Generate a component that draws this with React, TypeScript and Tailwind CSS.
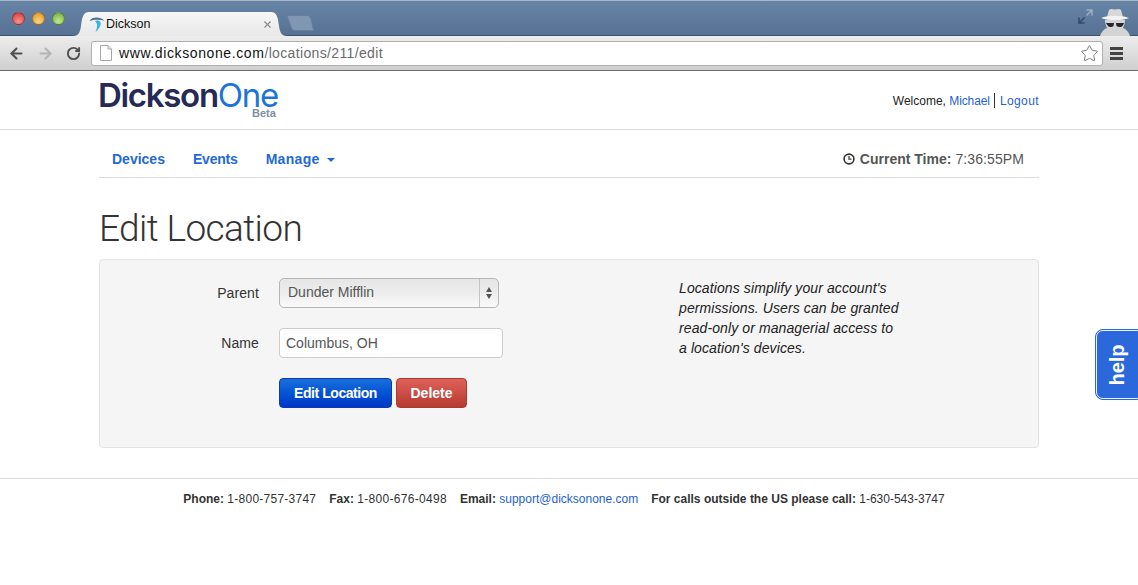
import React from "react";
import { ArrowLeft, ArrowRight, RotateCw, Star, X } from "lucide-react";

const sans = "font-['Liberation_Sans',Arial,sans-serif]";

const TrafficLight = ({ className }: { className: string }) => (
  <span className={`block w-[13px] h-[13px] rounded-full border border-black/30 ${className}`} />
);

const TabIcon = () => (
  <svg width="16" height="17" viewBox="0 0 16 17" className="shrink-0">
    <path d="M0.5 5 C3 0.5 11 0.5 15.5 4.5 C11 3.5 6 3 0.5 5 Z" fill="#4f6f96" />
    <path d="M8 4.5 C13 4 13.5 10 6.5 16 C8.5 11 9 8 6 5 Z" fill="#35b6e6" />
  </svg>
);

const PageIcon = () => (
  <svg width="12" height="16" viewBox="0 0 12 16" className="shrink-0">
    <path d="M0.5 0.5 H8 L11.5 4 V15.5 H0.5 Z" fill="#fff" stroke="#a8a8a8" />
    <path d="M8 0.5 V4 H11.5" fill="#e6e6e6" stroke="#a8a8a8" />
  </svg>
);

const Incognito = () => (
  <svg width="32" height="28" viewBox="0 0 32 28" className="block">
    <path d="M8 9 L10 2 C12 0 14 1.5 16 1.5 C18 1.5 20 0 22 2 L24 9 Z" fill="#d8d8d8" />
    <path d="M2 10 C9 7 23 7 30 10 C23 13 9 13 2 10 Z" fill="#f2f2f2" />
    <path d="M6 12 H26 C26 15 25 18 24 20 C27 21 30 24 31 28 H1 C2 24 5 21 8 20 C7 18 6 15 6 12 Z" fill="#d4d4d4" />
    <path d="M7 15 H15 L14.5 18 C12.5 20 9 19.5 7 15 Z M17 15 H25 C24 19.5 20 20 17.5 18 Z" fill="#262626" />
  </svg>
);

const ExpandIcon = () => (
  <svg width="15" height="15" viewBox="0 0 15 15" fill="none" strokeWidth="1.5">
    <path d="M8.5 1 H14 V6.5 M14 1 L8.5 6.5" stroke="#9db0c4" />
    <path d="M1 8.5 V14 H6.5 M1 14 L6.5 8.5" stroke="#2f4a68" />
  </svg>
);

const ClockIcon = () => (
  <svg width="12" height="12" viewBox="0 0 12 12" fill="none" stroke="#333" strokeWidth="1.6" className="shrink-0">
    <circle cx="6" cy="6" r="4.9" />
    <path d="M6 3 V6.2 H8.4" strokeWidth="1.2" />
  </svg>
);

const BrowserChrome = () => (
  <div className={`${sans} border-b border-[#6d6d6d]`}>
    <div className="h-[36px] flex items-end bg-gradient-to-b from-[#6784a6] to-[#567193] border-t border-[#a8b6c6] border-b border-b-[#3f556f]">
      <div className="self-start flex gap-[7px] pl-[12px] pt-[11px] w-[73px]">
        <TrafficLight className="bg-[radial-gradient(circle_at_50%_75%,#f7938f,#d42f33)]" />
        <TrafficLight className="bg-[radial-gradient(circle_at_50%_75%,#fcd67c,#e08f1e)]" />
        <TrafficLight className="bg-[radial-gradient(circle_at_50%_75%,#c6e98e,#68a93a)]" />
      </div>
      <div className="relative w-[214px] h-[24px] -mb-px flex items-center pl-[16px] pr-[14px] gap-[1px] text-[12.5px] text-[#111]">
        <svg width="214" height="24" viewBox="0 0 214 24" className="absolute inset-0">
          <defs>
            <linearGradient id="tabFill" x1="0" y1="0" x2="0" y2="1">
              <stop offset="0" stopColor="#f7f7f7" />
              <stop offset="1" stopColor="#e8e8e8" />
            </linearGradient>
          </defs>
          <path d="M0 24 C6 24 7 20 8 14 C9 6 10 0 16 0 H198 C204 0 205 6 206 14 C207 20 208 24 214 24 Z" fill="url(#tabFill)" />
        </svg>
        <span className="relative"><TabIcon /></span>
        <span className="relative flex-1">Dickson</span>
        <X size={11} strokeWidth={2.5} className="relative text-[#8a8a8a]" />
      </div>
      <svg width="27" height="16" viewBox="0 0 27 16" className="mb-[4px] shrink-0">
        <path d="M2 0.5 H20 C22 0.5 23 1.5 24 4 L26.5 15.5 H8 C6 15.5 5 14 4 12 L0.5 2 C0 1 1 0.5 2 0.5 Z" fill="#8097b4" stroke="#64809f" />
      </svg>
      <div className="flex-1" />
      <div className="self-start mt-[8px] mr-[6px]"><ExpandIcon /></div>
      <div className="mr-[7px] -mb-px"><Incognito /></div>
    </div>
    <div className="h-[34px] flex items-center bg-gradient-to-b from-[#ededed] to-[#cfcfcf] pr-[8px]">
      <div className="w-[91px] flex items-center pl-[8px] gap-[12px]">
        <ArrowLeft size={17} strokeWidth={3} className="text-[#505050]" />
        <ArrowRight size={17} strokeWidth={3} className="text-[#b5b5b5]" />
        <RotateCw size={15} strokeWidth={3} className="text-[#505050]" />
      </div>
      <div className="w-[1012px] h-[25px] flex items-center rounded-[3px] bg-white border border-[#b0b0b0] pl-[8px] pr-[3px] text-[14px]">
        <PageIcon />
        <span className="ml-[7px] text-[#111] tracking-[0.6px]">www.dicksonone.com</span>
        <span className="text-[#6b6b6b] tracking-[0.35px]">/locations/211/edit</span>
        <div className="flex-1" />
        <Star size={19} strokeWidth={1.2} className="text-[#777]" />
      </div>
      <div className="ml-[7px] w-[13px] flex flex-col gap-[2px]">
        <span className="h-[3px] bg-[#444]" />
        <span className="h-[3px] bg-[#444]" />
        <span className="h-[3px] bg-[#444]" />
      </div>
    </div>
  </div>
);

const SiteHeader = () => (
  <div className="h-[59px] border-b border-[#dcdcdc]">
    <div className="w-[940px] mx-auto flex justify-between">
      <div className="relative h-[58px] -ml-px">
        <div className="font-['Inter',sans-serif] text-[33px] font-semibold leading-[44px] pt-[2px] tracking-[-1.3px] text-[#252a56]">
          Dickson<span className="text-[#1c74d9] font-normal">One</span>
        </div>
        <span className="absolute right-[2px] top-[36px] text-[11px] font-bold leading-[12px] text-[#7f8ea3]">Beta</span>
      </div>
      <div className="pt-[22px] text-[12px] leading-[16px] text-[#222] flex">
        <span>Welcome,&nbsp;</span>
        <a className="text-[#1f5fce] tracking-[-0.1px]">Michael</a>
        <span className="w-px h-[15px] bg-[#333] ml-[4px] mr-[5px]" />
        <a className="text-[#1f5fce] tracking-[0.4px]">Logout</a>
      </div>
    </div>
  </div>
);

const NavBar = () => (
  <div className="w-[940px] mx-auto h-[48px] border-b border-[#dddddd] flex items-center justify-between pl-[13px] pr-[15px] pt-[11px]">
    <div className="flex items-center text-[14px] font-bold text-[#1f6ad4]">
      <a className="mr-[28px]">Devices</a>
      <a className="mr-[28px] tracking-[-0.2px]">Events</a>
      <a className="tracking-[0.3px]">Manage</a>
      <span className="ml-[7px] mt-[1px] w-0 h-0 border-x-[4px] border-x-transparent border-t-[4px] border-t-[#1f6ad4]" />
    </div>
    <div className="flex items-center text-[14px] text-[#555]">
      <ClockIcon />
      <b className="ml-[5px]">Current Time:</b>
      <span className="ml-[4px] tracking-[0.1px]">7:36:55PM</span>
    </div>
  </div>
);

const EditForm = () => (
  <div className="h-[189px] rounded-[4px] border border-[#e3e3e3] bg-[#f5f5f5] flex pt-[18px]">
    <div className="w-[179px] shrink-0 flex flex-col items-end pr-[20px] text-[14px] text-[#333] tracking-[0.1px]">
      <label className="h-[30px] leading-[30px]">Parent</label>
      <label className="h-[30px] mt-[20px] leading-[30px]">Name</label>
    </div>
    <div className="w-[400px] shrink-0">
      <div className="w-[220px] h-[30px] flex rounded-[5px] border border-[#b5b5b5] bg-gradient-to-b from-[#e6e6e6] via-[#ededed] to-[#fafafa] text-[14px] text-[#555] leading-[27px]">
        <span className="flex-1 pl-[8px]">Dunder Mifflin</span>
        <div className="w-[19px] border-l border-[#c4c4c4] flex flex-col items-center justify-center gap-[2px]">
          <span className="w-0 h-0 border-x-[3.5px] border-x-transparent border-b-[5px] border-b-[#555]" />
          <span className="w-0 h-0 border-x-[3.5px] border-x-transparent border-t-[5px] border-t-[#555]" />
        </div>
      </div>
      <input
        readOnly
        value="Columbus, OH"
        className="block w-[224px] h-[30px] mt-[20px] rounded-[4px] border border-[#cccccc] bg-white px-[6px] text-[14px] text-[#555] outline-none"
      />
      <div className="flex gap-[4px] mt-[20px] text-[14px] font-bold text-white">
        <button className="w-[113px] h-[30px] rounded-[4px] border border-[#0a3ba8] bg-gradient-to-b from-[#1a6fdc] to-[#0034c8] tracking-[-0.45px]">Edit Location</button>
        <button className="w-[71px] h-[30px] rounded-[4px] border border-[#a93a32] bg-gradient-to-b from-[#e0605a] to-[#b63a30]">Delete</button>
      </div>
    </div>
    <p className="w-[224px] text-[14px] leading-[20px] italic text-[#222] tracking-[0.1px]">
      Locations simplify your account's permissions. Users can be granted read-only or managerial access to a location's devices.
    </p>
  </div>
);

const Footer = () => (
  <div className="mt-[30px] border-t border-[#dcdcdc] pt-[12px] pr-[10px] flex justify-center gap-[13px] text-[12px] leading-[16px] text-[#333]">
    <span><b>Phone:</b> <span className="tracking-[0.25px]">1-800-757-3747</span></span>
    <span><b>Fax:</b> <span className="tracking-[0.3px]">1-800-676-0498</span></span>
    <span><b>Email:</b> <a className="text-[#1f5fce]">support@dicksonone.com</a></span>
    <span><b>For calls outside the US please call:</b> 1-630-543-3747</span>
  </div>
);

export default function App() {
  return (
    <div className={`${sans} relative h-[585px] overflow-hidden bg-white`}>
      <BrowserChrome />
      <SiteHeader />
      <NavBar />
      <div className="w-[940px] mx-auto">
        <h1 className="font-['Roboto',sans-serif] font-light text-[37px] leading-[44px] mt-[29px] mb-[8px] text-[#333] tracking-[-0.6px]">Edit Location</h1>
        <EditForm />
      </div>
      <Footer />
      <div className="absolute left-[1095px] top-[329px] w-[50px] h-[71px] rounded-[8px] border border-[#2a68dc] bg-[#2a68dc] outline outline-1 -outline-offset-2 outline-white/90 flex items-center justify-center pr-[6px]">
        <span className="text-[20px] font-bold leading-none text-white -rotate-90">help</span>
      </div>
    </div>
  );
}
